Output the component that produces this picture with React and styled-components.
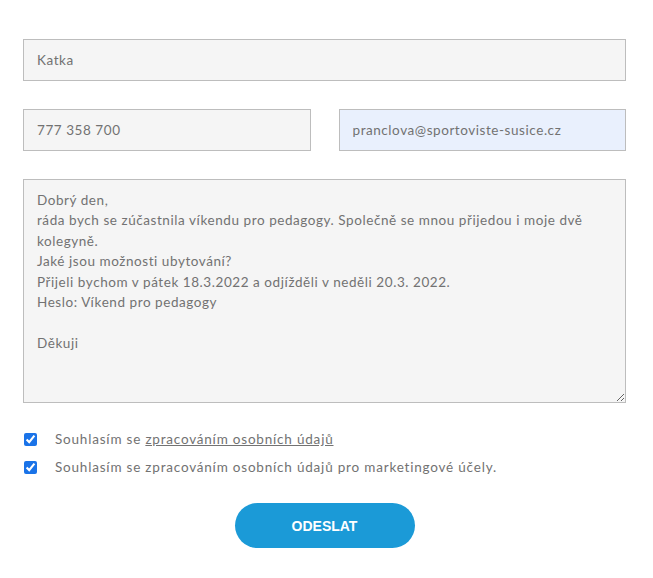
import React from 'react';
import styled, { createGlobalStyle } from 'styled-components';

const Global = createGlobalStyle`
  body {
    margin: 0;
    background: #fff;
    font-family: Lato, "Open Sans", sans-serif;
  }
`;

const textFont = `font-family: Lato, "Open Sans", sans-serif;
  font-weight: 400;
  font-size: 13.5px;
  letter-spacing: 0.56px;
  color: #727272;`;

const S = {
  Form: styled.form`
    padding: 39px 27px 28px 23px;
    display: flex;
    flex-direction: column;
  `,
  Row: styled.div`
    display: grid;
    grid-template-columns: 1fr 1fr;
    gap: 28px;
    margin-bottom: 28px;
  `,
  Field: styled.input`
    box-sizing: border-box;
    width: 100%;
    height: 42px;
    padding: 0 13px;
    margin: ${p => (p.$spaced ? '0 0 28px' : '0')};
    border: 1px solid #bdbdbd;
    background: ${p => (p.$autofill ? '#e9f0fd' : '#f5f5f5')};
    ${textFont}
    outline: none;
  `,
  Message: styled.textarea`
    box-sizing: border-box;
    width: 100%;
    height: 224px;
    padding: 10px 13px;
    margin-bottom: 22px;
    border: 1px solid #bdbdbd;
    background: #f5f5f5;
    ${textFont}
    line-height: 20.4px;
    resize: vertical;
    outline: none;
  `,
  Consent: styled.label`
    display: flex;
    align-items: center;
    gap: 18px;
    height: 28px;
    padding-left: 1px;
    ${textFont}
    letter-spacing: 0.8px;
  `,
  Box: styled.input`
    width: 13px;
    height: 13px;
    margin: 0;
    accent-color: #1a73e8;
  `,
  Link: styled.a`
    color: inherit;
    text-decoration: underline;
  `,
  Button: styled.button`
    align-self: center;
    margin-top: 22px;
    width: 180px;
    height: 45px;
    border: none;
    border-radius: 23px;
    background: #1b9ad7;
    color: #fff;
    font: 700 14px "Liberation Sans", Arial, sans-serif;
    cursor: pointer;
  `,
};

const text = `Dobrý den,
ráda bych se zúčastnila víkendu pro pedagogy. Společně se mnou přijedou i moje dvě kolegyně.
Jaké jsou možnosti ubytování?
Přijeli bychom v pátek 18.3.2022 a odjížděli v neděli 20.3. 2022.
Heslo: Víkend pro pedagogy

Děkuji`;

const App = () => (
  <>
    <Global />
    <S.Form onSubmit={e => e.preventDefault()}>
      <S.Field $spaced defaultValue="Katka" />
      <S.Row>
        <S.Field defaultValue="777 358 700" />
        <S.Field $autofill defaultValue="pranclova@sportoviste-susice.cz" />
      </S.Row>
      <S.Message defaultValue={text} />
      <S.Consent>
        <S.Box type="checkbox" defaultChecked />
        <span>Souhlasím se <S.Link href="#">zpracováním osobních údajů</S.Link></span>
      </S.Consent>
      <S.Consent>
        <S.Box type="checkbox" defaultChecked />
        <span>Souhlasím se zpracováním osobních údajů pro marketingové účely.</span>
      </S.Consent>
      <S.Button type="submit">ODESLAT</S.Button>
    </S.Form>
  </>
);

export default App;
